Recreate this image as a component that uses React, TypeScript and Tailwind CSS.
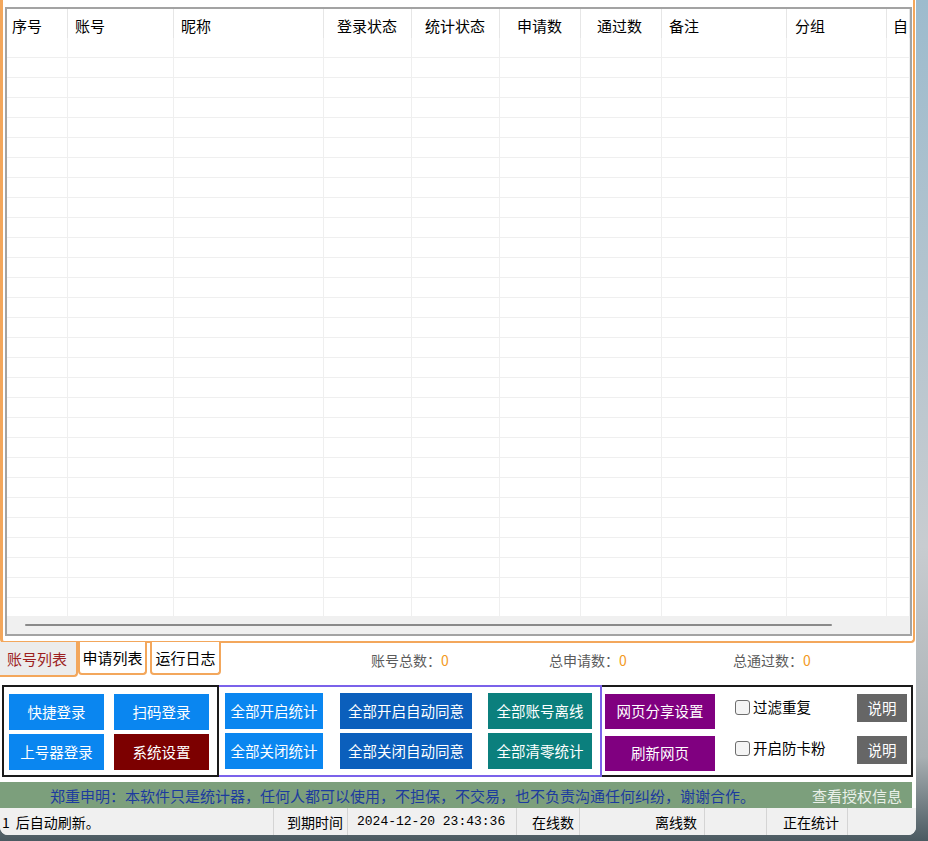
import React from 'react';

const font = "font-['Microsoft_YaHei','Noto_Sans_CJK_SC',sans-serif]";

// column widths and left padding for header text
const columns = [
  { label: '序号', cls: 'w-[61px] pl-[5px]' },
  { label: '账号', cls: 'w-[106px] pl-[7px]' },
  { label: '昵称', cls: 'w-[150px] pl-[7px]' },
  { label: '登录状态', cls: 'w-[88px] pl-[13px]' },
  { label: '统计状态', cls: 'w-[88px] pl-[13px]' },
  { label: '申请数', cls: 'w-[81px] pl-[17px]' },
  { label: '通过数', cls: 'w-[81px] pl-[16px]' },
  { label: '备注', cls: 'w-[125px] pl-[7px]' },
  { label: '分组', cls: 'w-[100px] pl-[8px]' },
  { label: '自', cls: 'flex-1 pl-[6px]' },
];

const rows = Array.from({ length: 29 }, (_, i) => i);

function Btn({ children, color, className = '' }: { children: React.ReactNode; color: string; className?: string }) {
  return (
    <div className={`flex items-center justify-center text-white text-[14.5px] leading-none ${color} ${className}`}>
      {children}
    </div>
  );
}

function Check({ label }: { label: string }) {
  return (
    <div className="flex items-center gap-[3px] text-[14.5px] text-black leading-none">
      <span className="w-[15px] h-[15px] rounded-[3px] border border-[#6d6d6d] bg-[#f4f4f4]" />
      <span>{label}</span>
    </div>
  );
}

export default function App() {
  return (
    <div className={`w-[928px] h-[841px] overflow-hidden bg-[linear-gradient(180deg,#9dbbcd_0%,#b4c4ce_35%,#c8ccd0_65%,#a9b0b3_90%,#4b5a61_100%)] ${font}`}>
      <div className="w-[916px] h-[835px] bg-white rounded-b-[8px] overflow-hidden flex flex-col">
        {/* tab panel */}
        <div className="w-[915px] h-[643px] border-l-[3px] border-r-2 border-b-2 border-[#f3a75c] rounded-b-[4px] pl-[2px] pr-[1px] pt-[7px]">
          <div className="h-[629px] border-2 border-[#a3a3a3] flex flex-col bg-white">
            <div className="h-[29px] flex shrink-0">
              {columns.map((c) => (
                <div key={c.label} className={`${c.cls} shrink-0 border-r border-[#e6e6e6] text-[15px] leading-none text-black pt-[9px] overflow-hidden whitespace-nowrap`}>
                  {c.label}
                </div>
              ))}
            </div>
            <div className="h-[578px] overflow-hidden shrink-0">
              {rows.map((r) => (
                <div key={r} className="h-[20px] flex border-b border-[#efefef]">
                  {columns.map((c) => (
                    <div key={c.label} className={`${c.cls} shrink-0 border-r border-[#efefef]`} />
                  ))}
                </div>
              ))}
            </div>
            <div className="flex-1 bg-[#f0f0f0] flex items-center pl-[18px]">
              <div className="w-[807px] h-[2px] rounded bg-[#8a8a8a]" />
            </div>
          </div>
        </div>

        {/* tabs + totals */}
        <div className="h-[43px] flex items-start -mt-[1px]">
          <div className="w-[78px] h-[35px] bg-[#ececec] border-r-2 border-b-2 border-[#f3a75c] rounded-br-[4px] flex items-center pl-[7px] text-[15px] text-[#9c1f1f] leading-none">
            账号列表
          </div>
          <div className="w-[69px] h-[33px] bg-white border-x-2 border-b-2 border-[#f3a75c] rounded-b-[4px] flex items-center justify-center text-[15px] text-black leading-none">
            申请列表
          </div>
          <div className="w-[71px] h-[33px] ml-[3px] bg-white border-x-2 border-b-2 border-[#f3a75c] rounded-b-[4px] flex items-center justify-center text-[15px] text-black leading-none">
            运行日志
          </div>
          <div className="h-[35px] flex items-center text-[14px] text-[#5b5b5b] leading-none ml-[150px]">
            <div className="w-[178px]">账号总数：<span className="text-[#f39a1e]">0</span></div>
            <div className="w-[184px]">总申请数：<span className="text-[#f39a1e]">0</span></div>
            <div>总通过数：<span className="text-[#f39a1e]">0</span></div>
          </div>
        </div>

        {/* button panel */}
        <div className="ml-[2px] w-[911px] h-[92px] flex">
          <div className="w-[217px] border-2 border-[#1a1a1a] grid grid-cols-[95px_95px] gap-x-[10px] gap-y-[4px] pl-[5px] pt-[7px] content-start">
            <Btn color="bg-[#0a86f0]" className="h-[36px]">快捷登录</Btn>
            <Btn color="bg-[#0a86f0]" className="h-[36px]">扫码登录</Btn>
            <Btn color="bg-[#0a86f0]" className="h-[36px]">上号器登录</Btn>
            <Btn color="bg-[#7c0000]" className="h-[36px]">系统设置</Btn>
          </div>
          <div className="w-[383px] border-y-2 border-r-2 border-[#7b62ea] flex flex-col gap-[4px] pl-[6px] pt-[6px]">
            <div className="flex">
              <Btn color="bg-[#0a86f0]" className="w-[98px] h-[36px]">全部开启统计</Btn>
              <Btn color="bg-[#0b5fbc]" className="w-[132px] h-[36px] ml-[17px]">全部开启自动同意</Btn>
              <Btn color="bg-[#0b7f7d]" className="w-[104px] h-[36px] ml-[16px]">全部账号离线</Btn>
            </div>
            <div className="flex">
              <Btn color="bg-[#0a86f0]" className="w-[98px] h-[36px]">全部关闭统计</Btn>
              <Btn color="bg-[#0b5fbc]" className="w-[132px] h-[36px] ml-[17px]">全部关闭自动同意</Btn>
              <Btn color="bg-[#0b7f7d]" className="w-[104px] h-[36px] ml-[16px]">全部清零统计</Btn>
            </div>
          </div>
          <div className="flex-1 border-y-2 border-r-2 border-[#1a1a1a] flex pl-[3px] pt-[7px]">
            <div className="flex flex-col gap-[7px]">
              <Btn color="bg-[#800080]" className="w-[110px] h-[35px]">网页分享设置</Btn>
              <Btn color="bg-[#800080]" className="w-[110px] h-[35px]">刷新网页</Btn>
            </div>
            <div className="flex flex-col gap-[26px] ml-[20px] pt-[6px]">
              <Check label="过滤重复" />
              <Check label="开启防卡粉" />
            </div>
            <div className="flex flex-col gap-[14px] ml-auto mr-[4px]">
              <Btn color="bg-[#666666]" className="w-[50px] h-[28px]">说明</Btn>
              <Btn color="bg-[#666666]" className="w-[50px] h-[28px]">说明</Btn>
            </div>
          </div>
        </div>

        {/* notice */}
        <div className="mt-[5px] w-[912px] h-[26px] bg-[#7c9f7c] flex items-center text-[15px] leading-none">
          <span className="pl-[50px] text-[#1c3b9e]">郑重申明：本软件只是统计器，任何人都可以使用，不担保，不交易，也不负责沟通任何纠纷，谢谢合作。</span>
          <span className="ml-auto pr-[10px] text-[#e9f0e9]">查看授权信息</span>
        </div>

        {/* status bar */}
        <div className="flex-1 bg-[#f0f0f0] flex items-stretch text-[14px] leading-none text-black">
          <div className="w-[273px] flex items-center gap-[6px] pl-[2px] whitespace-nowrap">
            <span>1</span>
            <span>后自动刷新。</span>
          </div>
          <div className="w-[74px] border-l border-[#d4d4d4] flex items-center justify-end pr-[4px]">到期时间</div>
          <div className="w-[169px] border-l border-[#d4d4d4] flex items-center pl-[9px] font-['Liberation_Mono',monospace] text-[13px]">2024-12-20 23:43:36</div>
          <div className="w-[63px] border-l border-[#d4d4d4] flex items-center justify-end pr-[5px]">在线数</div>
          <div className="w-[125px] border-l border-[#d4d4d4] flex items-center justify-end pr-[7px]">离线数</div>
          <div className="w-[62px] border-l border-[#d4d4d4]" />
          <div className="w-[81px] border-l border-[#d4d4d4] flex items-center justify-end pr-[8px]">正在统计</div>
          <div className="w-[65px] border-l border-[#d4d4d4]" />
        </div>
      </div>
    </div>
  );
}
